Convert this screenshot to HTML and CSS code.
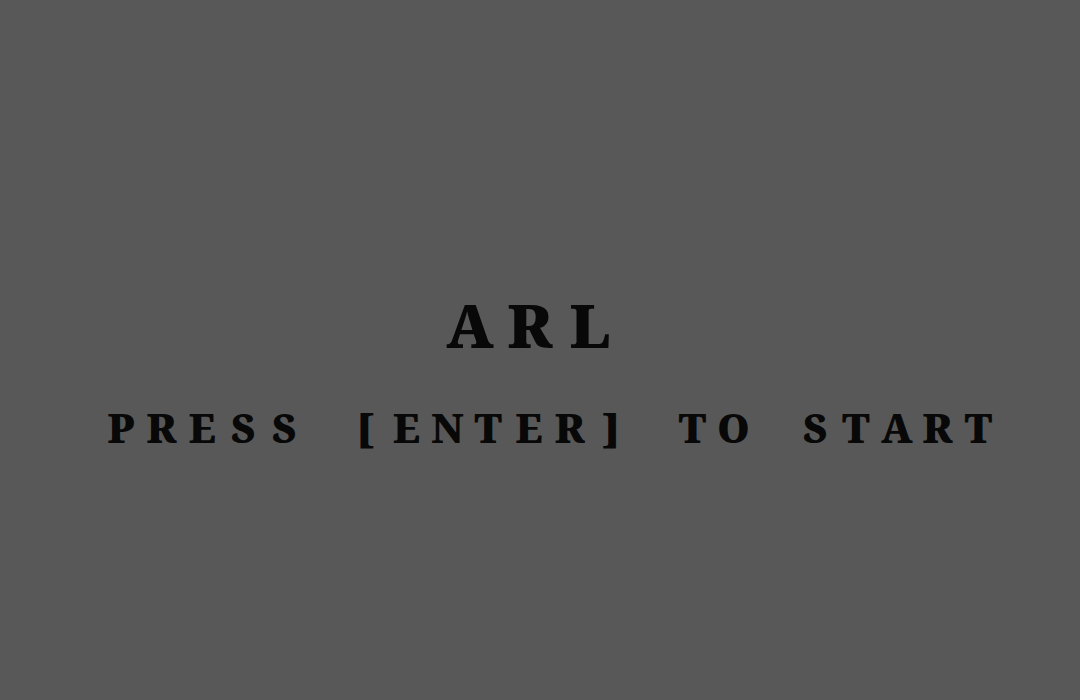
FILE: index.html
```html
<!DOCTYPE html>
<html>
<head>
<meta charset="utf-8">
<link rel="stylesheet" href="styles.css">
</head>
<body>
<main class="screen">
  <h1 class="title"><span class="ch">A</span><span class="ch">R</span><span class="ch">L</span></h1>
  <p class="prompt"><span class="ch">P</span><span class="ch">R</span><span class="ch">E</span><span class="ch">S</span><span class="ch">S</span><span class="ch">&nbsp;</span><span class="ch">[</span><span class="ch">E</span><span class="ch">N</span><span class="ch">T</span><span class="ch">E</span><span class="ch">R</span><span class="ch">]</span><span class="ch">&nbsp;</span><span class="ch">T</span><span class="ch">O</span><span class="ch">&nbsp;</span><span class="ch">S</span><span class="ch">T</span><span class="ch">A</span><span class="ch">R</span><span class="ch">T</span></p>
</main>
</body>
</html>
```
FILE: styles.css
```css
html, body {
  margin: 0;
  padding: 0;
  height: 100%;
}
body {
  background: #585858;
  color: #080808;
  font-family: "Noto Serif", "Liberation Serif", serif;
  font-weight: 900;
}
.screen {
  height: 100%;
  display: flex;
  flex-direction: column;
  align-items: center;
  justify-content: center;
  padding-top: 43px;
  box-sizing: border-box;
}
.title {
  display: flex;
  margin: 0 20px 0 0;
  font-size: 60px;
  font-weight: 900;
  line-height: 1;
}
.title .ch {
  width: 60px;
  text-align: center;
}
.prompt {
  display: flex;
  margin: 53px 0 0 19px;
  font-size: 40px;
  line-height: 1;
}
.prompt .ch {
  width: 40.85px;
  text-align: center;
}
```
